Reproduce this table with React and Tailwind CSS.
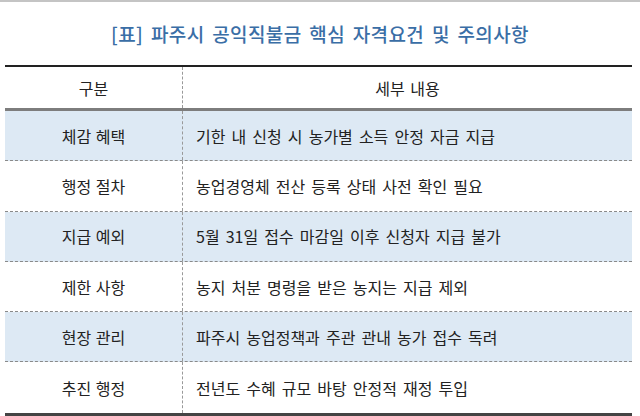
const rows = [
  ["체감 혜택", "기한 내 신청 시 농가별 소득 안정 자금 지급"],
  ["행정 절차", "농업경영체 전산 등록 상태 사전 확인 필요"],
  ["지급 예외", "5월 31일 접수 마감일 이후 신청자 지급 불가"],
  ["제한 사항", "농지 처분 명령을 받은 농지는 지급 제외"],
  ["현장 관리", "파주시 농업정책과 주관 관내 농가 접수 독려"],
  ["추진 행정", "전년도 수혜 규모 바탕 안정적 재정 투입"],
];

export default function App() {
  return (
    <div
      className="w-[640px] h-[416px] bg-white border-t-2 border-[#c4c4c4] overflow-hidden"
      style={{ fontFamily: '"Noto Sans CJK KR", "Noto Sans", sans-serif' }}
    >
      <div className="h-[63px] flex items-center justify-center pt-[2px]">
        <h1 className="text-[19px] font-medium text-[#3a6ea6] tracking-[0.4px] [word-spacing:3px]">
          [표] 파주시 공익직불금 핵심 자격요건 및 주의사항
        </h1>
      </div>
      <div className="ml-[5px] w-[627px] border-t-2 border-[#222] border-b-[3px] border-b-[#444]">
        <div className="flex h-[44px] border-b-[3px] border-[#7d7d7d] text-[16px] text-[#222]">
          <div className="w-[178px] flex items-center justify-center border-r border-dashed border-[#999]">
            구분
          </div>
          <div className="flex-1 flex items-center justify-center [word-spacing:2px]">세부 내용</div>
        </div>
        {rows.map((r, i) => (
          <div
            key={i}
            className={
              "flex h-[50.3px] text-[16px] text-[#222] " +
              (i % 2 === 0 ? "bg-[#dde9f4] " : "bg-white ") +
              (i < rows.length - 1 ? "border-b border-dashed border-[#8a8a8a]" : "")
            }
          >
            <div className="w-[178px] flex items-center justify-center border-r border-dashed border-[#999] [word-spacing:1px]">
              {r[0]}
            </div>
            <div className="flex-1 flex items-center pl-[13px] [word-spacing:2.5px]">{r[1]}</div>
          </div>
        ))}
      </div>
    </div>
  );
}
